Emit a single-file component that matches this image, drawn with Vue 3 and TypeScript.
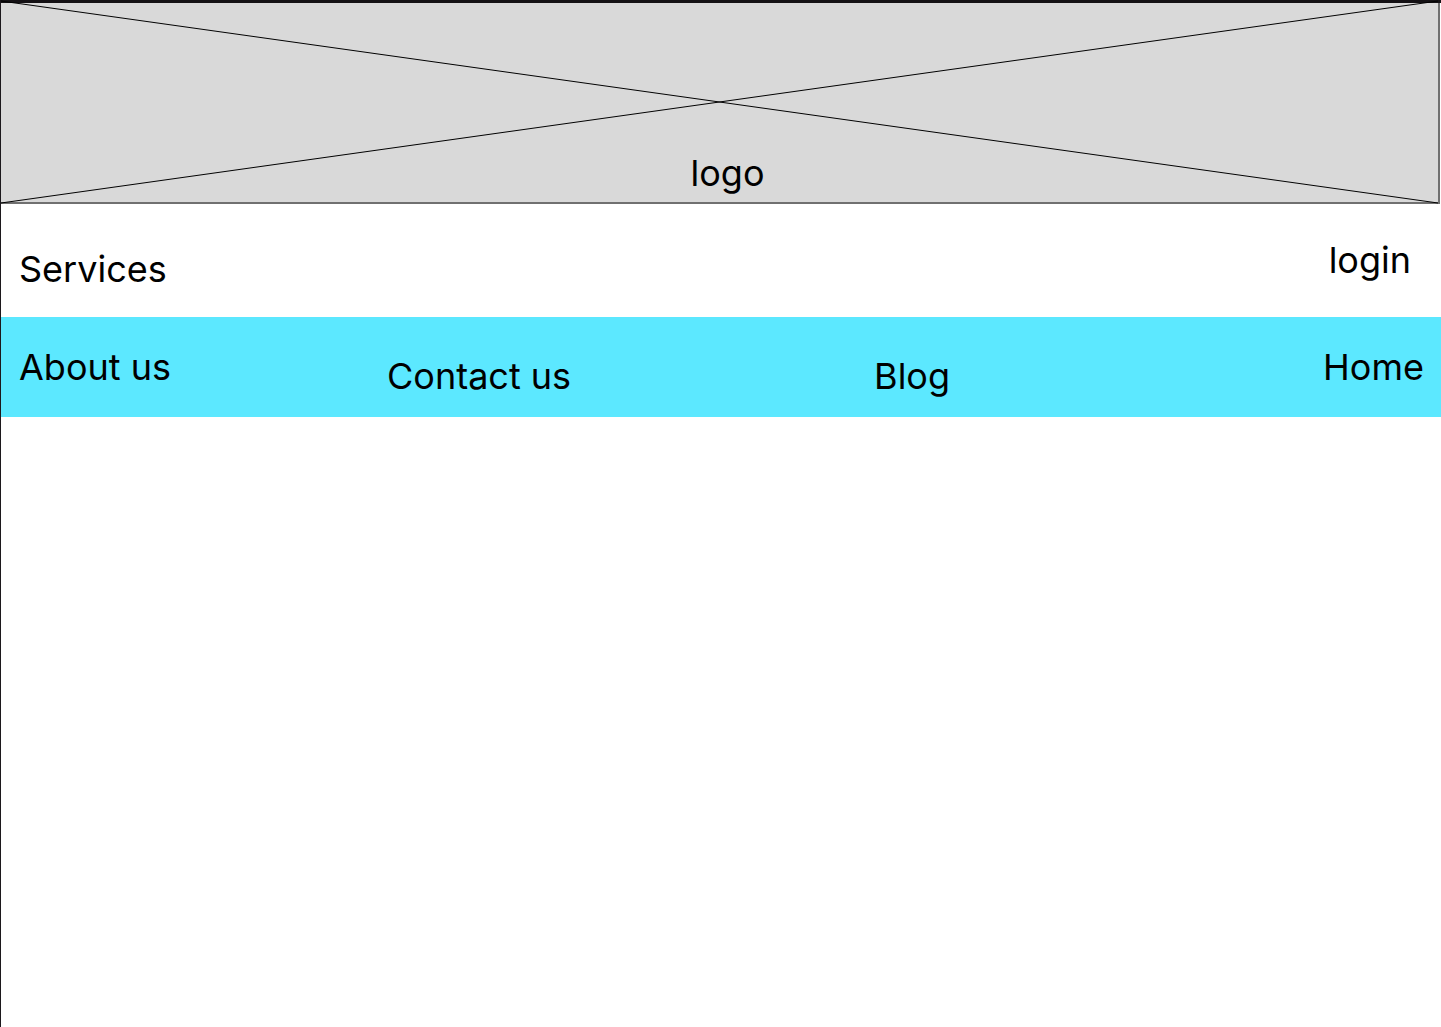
<script setup lang="ts">
interface NavLink {
  label: string
  href: string
  low?: boolean
}

const accountLinks: NavLink[] = [
  { label: 'Services', href: '#services', low: true },
  { label: 'login', href: '#login' },
]

const mainLinks: NavLink[] = [
  { label: 'About us', href: '#about' },
  { label: 'Contact us', href: '#contact', low: true },
  { label: 'Blog', href: '#blog', low: true },
  { label: 'Home', href: '#home' },
]
</script>

<template>
  <div class="page">
    <header class="banner">
      <svg class="cross" viewBox="0 0 1438 202" preserveAspectRatio="none" aria-hidden="true">
        <path d="M0 0L1438 202M0 202L1438 0" fill="none" stroke="#000" stroke-width="1" />
      </svg>
      <span class="logo">logo</span>
    </header>
    <nav class="links top" aria-label="Account">
      <a v-for="link in accountLinks" :key="link.label" :href="link.href" :class="{ low: link.low }">{{ link.label }}</a>
    </nav>
    <nav class="links main" aria-label="Main">
      <a v-for="link in mainLinks" :key="link.label" :href="link.href" :class="{ low: link.low }">{{ link.label }}</a>
    </nav>
  </div>
</template>

<style>
body {
  margin: 0;
  background: #fff;
}
</style>

<style scoped>
.page {
  box-sizing: border-box;
  min-height: 100vh;
  border-top: 3px solid #141114;
  border-left: 1px solid #1c181c;
  font-family: Inter, sans-serif;
  font-size: 36px;
  line-height: 44px;
  color: #000;
}

.banner {
  position: relative;
  display: flex;
  justify-content: center;
  margin-right: 1px;
  padding: 148px 0 7px 16px;
  border-right: 2px solid #707070;
  border-bottom: 2px solid #707070;
  background: #d9d9d9;
}

.cross {
  position: absolute;
  top: -2px;
  left: 0;
  width: 100%;
  height: calc(100% + 3px);
  overflow: visible;
}

.logo {
  position: relative;
}

.links {
  display: flex;
  min-height: 53px;
}

.links a {
  color: inherit;
  text-decoration: none;
  white-space: nowrap;
}

.links .low {
  align-self: end;
}

.top {
  justify-content: space-between;
  padding: 34px 30px 26px 18px;
}

.main {
  display: grid;
  grid-template-columns: 368fr 487fr 449fr auto;
  padding: 28px 17px 19px 18px;
  background: #5ce8ff;
}
</style>
